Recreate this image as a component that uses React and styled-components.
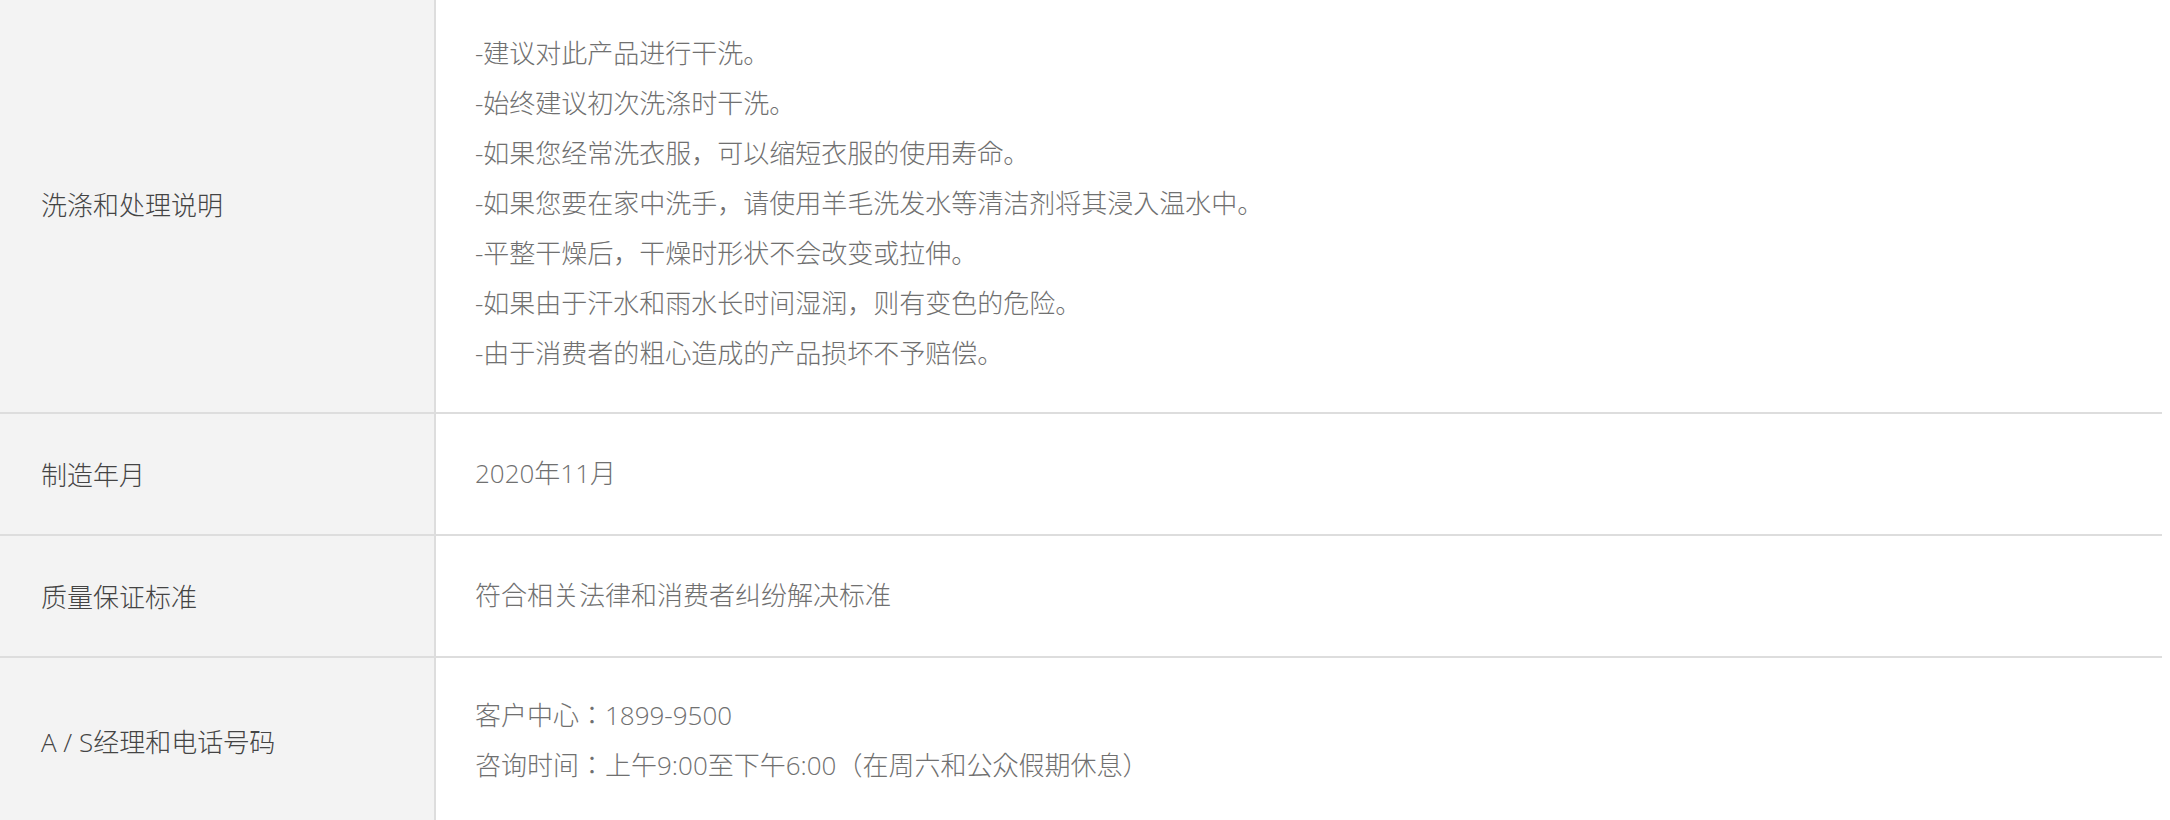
import React from "react";
import styled, { createGlobalStyle } from "styled-components";

const GlobalStyle = createGlobalStyle`
  html, body {
    margin: 0;
    padding: 0;
    background: #fff;
  }
  body {
    font-family: "Open Sans", "Noto Sans CJK JP", "Noto Sans", sans-serif;
    font-weight: 300;
  }
`;

const Table = styled.div`
  width: 2162px;
  margin-top: -4px;
  display: flex;
  flex-direction: column;
`;

const Row = styled.div`
  display: grid;
  grid-template-columns: 436px 1fr;
  min-height: 120px;
  border-bottom: 2px solid #dddddd;

  &:last-child {
    border-bottom: none;
  }
`;

const Label = styled.div`
  display: flex;
  align-items: center;
  padding: 0 20px 0 41px;
  background: #f3f3f3;
  border-right: 2px solid #dddddd;
  font-size: 26px;
  color: #444;
`;

const Value = styled.div`
  display: flex;
  flex-direction: column;
  justify-content: center;
  padding: 32px 20px 34px 39px;
  font-size: 26px;
  line-height: 50px;
  color: #707070;
`;

const Line = styled.p`
  margin: 0;
`;

const rows = [
  {
    label: "洗涤和处理说明",
    lines: [
      "-建议对此产品进行干洗。",
      "-始终建议初次洗涤时干洗。",
      "-如果您经常洗衣服，可以缩短衣服的使用寿命。",
      "-如果您要在家中洗手，请使用羊毛洗发水等清洁剂将其浸入温水中。",
      "-平整干燥后，干燥时形状不会改变或拉伸。",
      "-如果由于汗水和雨水长时间湿润，则有变色的危险。",
      "-由于消费者的粗心造成的产品损坏不予赔偿。",
    ],
  },
  { label: "制造年月", lines: ["2020年11月"] },
  { label: "质量保证标准", lines: ["符合相关法律和消费者纠纷解决标准"] },
  {
    label: "A / S经理和电话号码",
    lines: ["客户中心：1899-9500", "咨询时间：上午9:00至下午6:00（在周六和公众假期休息）"],
  },
];

export default function App() {
  return (
    <>
      <GlobalStyle />
      <Table>
        {rows.map((row) => (
          <Row key={row.label}>
            <Label>{row.label}</Label>
            <Value>
              {row.lines.map((line) => (
                <Line key={line}>{line}</Line>
              ))}
            </Value>
          </Row>
        ))}
      </Table>
    </>
  );
}
